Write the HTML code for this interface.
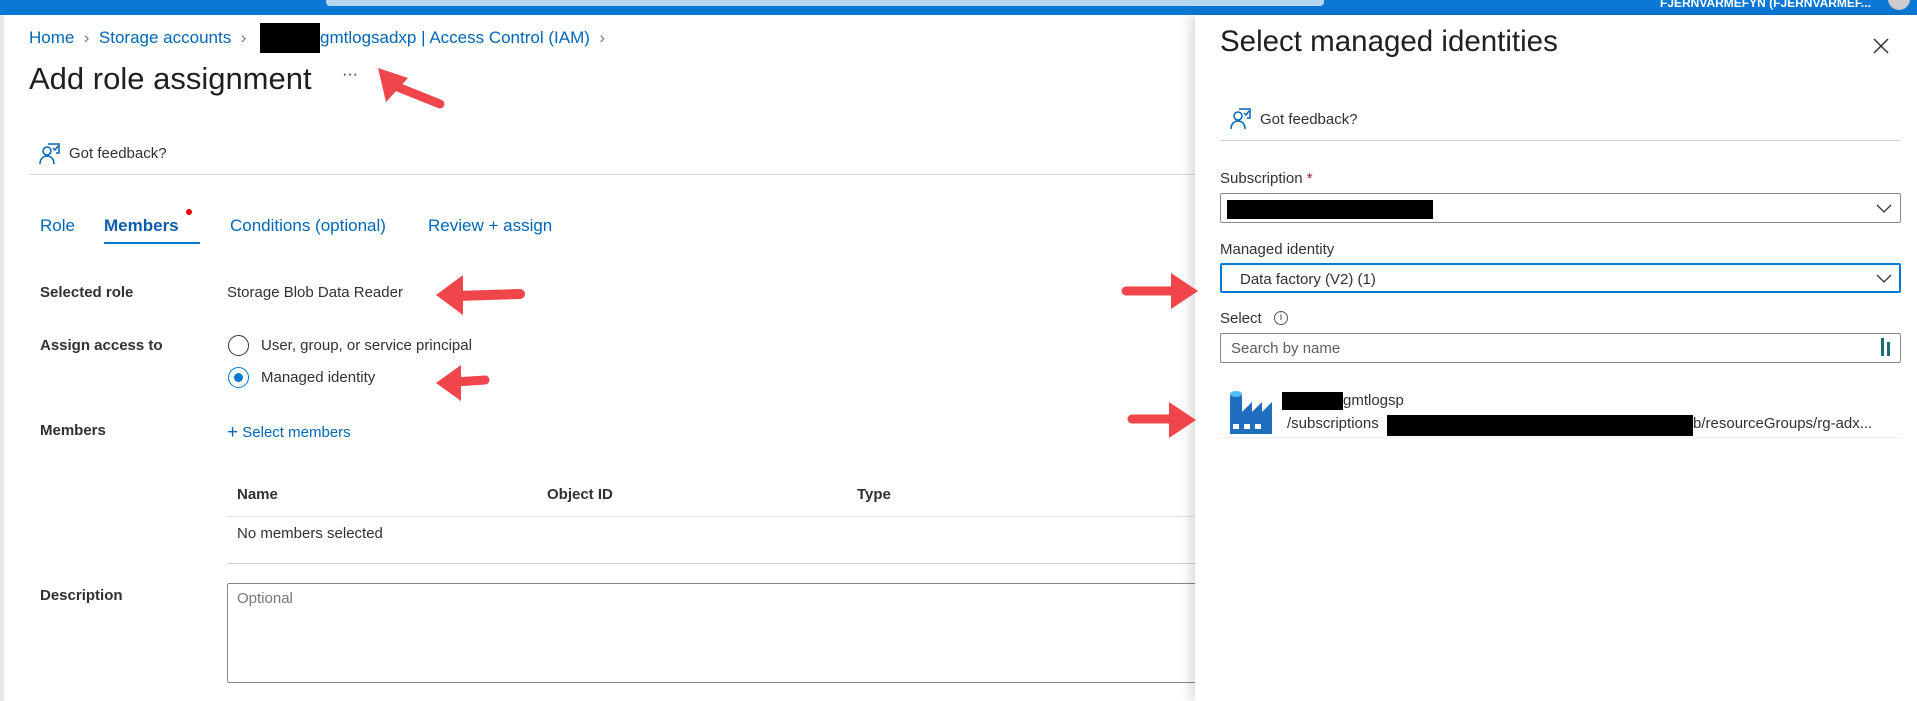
<!DOCTYPE html>
<html><head><meta charset="utf-8"><style>
*{margin:0;padding:0;box-sizing:border-box}
body{width:1917px;height:701px;overflow:hidden;background:#fff;font-family:"Liberation Sans",sans-serif;color:#323130;position:relative;font-size:15px}
.a{position:absolute;white-space:nowrap}
.blue{color:#0067b8}
.b{font-weight:bold}
.line{position:absolute;height:1px;background:#d6d6d6}
.blk{position:absolute;background:#000}
</style></head><body>
<div class="a" style="left:0;top:0;width:1917px;height:15px;background:#0a78d4"></div>
<div class="a" style="left:326px;top:0;width:998px;height:6px;background:#b4d5f0;border-radius:0 0 4px 4px"></div>
<div class="a b" style="left:1660px;top:-4px;color:#fff;font-size:12px">FJERNVARMEFYN (FJERNVARMEF...</div>
<div class="a" style="left:1888px;top:-12px;width:22px;height:22px;border-radius:50%;background:#ccc"></div>
<div class="a" style="left:0;top:15px;width:4px;height:686px;background:#e8e8e8"></div>

<div class="a blue" style="left:29px;top:28px;font-size:17px">Home <span style="color:#777">&nbsp;›&nbsp;</span> Storage accounts <span style="color:#777">&nbsp;›</span></div>
<div class="blk" style="left:260px;top:23px;width:60px;height:30px"></div>
<div class="a blue" style="left:320px;top:28px;font-size:17px">gmtlogsadxp | Access Control (IAM) <span style="color:#777">&nbsp;›</span></div>
<div class="a" style="left:29px;top:61px;font-size:31px;color:#201f1e">Add role assignment</div>
<div class="a" style="left:342px;top:66px;font-size:16px">···</div>

<svg class="a" style="left:38px;top:142px" width="24" height="24" viewBox="0 0 24 24" fill="none" stroke="#0067b8" stroke-width="1.5"><circle cx="9" cy="9" r="4"/><path d="M2 22c0-5 3-8 7-8s7 3 7 8"/><path d="M10 2h11v9h-3"/><path d="M15 6l2 2 3-4"/></svg>
<div class="a" style="left:69px;top:145px;font-size:15px">Got feedback?</div>
<div class="line" style="left:29px;top:174px;width:1170px"></div>

<div class="a blue" style="left:40px;top:216px;font-size:17px">Role</div>
<div class="a b" style="left:104px;top:216px;font-size:17px;color:#0a5ea8">Members</div>
<div class="a" style="left:186px;top:209px;width:6px;height:6px;border-radius:50%;background:#e00"></div>
<div class="a blue" style="left:230px;top:216px;font-size:17px">Conditions (optional)</div>
<div class="a blue" style="left:428px;top:216px;font-size:17px">Review + assign</div>
<div class="a" style="left:104px;top:242px;width:96px;height:2px;background:#0078d4"></div>

<div class="a b" style="left:40px;top:284px">Selected role</div>
<div class="a" style="left:227px;top:284px">Storage Blob Data Reader</div>
<div class="a b" style="left:40px;top:337px">Assign access to</div>
<div class="a" style="left:228px;top:335px;width:21px;height:21px;border-radius:50%;border:1px solid #333"></div>
<div class="a" style="left:261px;top:337px">User, group, or service principal</div>
<div class="a" style="left:228px;top:367px;width:21px;height:21px;border-radius:50%;border:1px solid #0078d4"></div>
<div class="a" style="left:234px;top:373px;width:9px;height:9px;border-radius:50%;background:#0078d4"></div>
<div class="a" style="left:261px;top:369px">Managed identity</div>
<div class="a b" style="left:40px;top:422px">Members</div>
<div class="a blue" style="left:227px;top:421px"><span style="font-size:19px;position:relative;top:1px">+</span> Select members</div>
<div class="a b" style="left:237px;top:486px">Name</div>
<div class="a b" style="left:547px;top:486px">Object ID</div>
<div class="a b" style="left:857px;top:486px">Type</div>
<div class="line" style="left:227px;top:516px;width:970px;background:#e1e1e1"></div>
<div class="a" style="left:237px;top:525px">No members selected</div>
<div class="line" style="left:227px;top:563px;width:970px;background:#cfcfcf"></div>
<div class="a b" style="left:40px;top:587px">Description</div>
<div class="a" style="left:227px;top:583px;width:990px;height:100px;border:1px solid #8a8886;border-radius:2px"></div>
<div class="a" style="left:237px;top:590px;color:#777">Optional</div>

<!-- panel -->
<div class="a" style="left:1195px;top:15px;width:722px;height:686px;background:#fff;box-shadow:-6px 0 10px rgba(0,0,0,.12)"></div>
<div class="a" style="left:1220px;top:25px;font-size:29.5px;color:#201f1e">Select managed identities</div>
<svg class="a" style="left:1872px;top:37px" width="18" height="18" viewBox="0 0 18 18" stroke="#333" stroke-width="1.5"><path d="M2 2L16 16M16 2L2 16"/></svg>
<svg class="a" style="left:1229px;top:107px" width="24" height="24" viewBox="0 0 24 24" fill="none" stroke="#0067b8" stroke-width="1.5"><circle cx="9" cy="9" r="4"/><path d="M2 22c0-5 3-8 7-8s7 3 7 8"/><path d="M10 2h11v9h-3"/><path d="M15 6l2 2 3-4"/></svg>
<div class="a" style="left:1260px;top:111px">Got feedback?</div>
<div class="line" style="left:1220px;top:140px;width:681px"></div>
<div class="a" style="left:1220px;top:170px">Subscription <span style="color:#a4262c">*</span></div>
<div class="a" style="left:1220px;top:193px;width:681px;height:30px;border:1px solid #8a8886;border-radius:2px"></div>
<div class="blk" style="left:1227px;top:200px;width:206px;height:19px"></div>
<svg class="a" style="left:1876px;top:202px" width="16" height="12" viewBox="0 0 16 12" fill="none" stroke="#333" stroke-width="1.3"><path d="M1 3l7 7 7-7"/></svg>
<div class="a" style="left:1220px;top:241px">Managed identity</div>
<div class="a" style="left:1220px;top:263px;width:681px;height:30px;border:2px solid #0078d4;border-radius:2px"></div>
<div class="a" style="left:1240px;top:271px">Data factory (V2) (1)</div>
<svg class="a" style="left:1876px;top:272px" width="16" height="12" viewBox="0 0 16 12" fill="none" stroke="#333" stroke-width="1.3"><path d="M1 3l7 7 7-7"/></svg>
<div class="a" style="left:1220px;top:310px">Select</div>
<div class="a" style="left:1274px;top:311px;width:14px;height:14px;border-radius:50%;border:1px solid #555;font-size:10px;text-align:center;line-height:12px">i</div>
<div class="a" style="left:1220px;top:333px;width:681px;height:30px;border:1px solid #8a8886;border-radius:2px"></div>
<div class="a" style="left:1231px;top:340px;color:#605e5c">Search by name</div>
<div class="a" style="left:1881px;top:338px;width:3px;height:18px;background:#1a6e7a"></div>
<div class="a" style="left:1887px;top:342px;width:3px;height:14px;background:#1a6e7a"></div>
<svg class="a" style="left:1230px;top:390px" width="44" height="44" viewBox="0 0 44 44"><rect x="0" y="4" width="12" height="40" fill="#1f6ebf"/><ellipse cx="6" cy="4" rx="6" ry="3" fill="#50c0f0"/><path d="M12 22l10-10v10l10-10v10l10-10v32H12z" fill="#1f6ebf"/><rect x="3" y="34" width="6" height="5" fill="#fff"/><rect x="14" y="34" width="6" height="5" fill="#fff"/><rect x="25" y="34" width="6" height="5" fill="#fff"/></svg>
<div class="blk" style="left:1282px;top:392px;width:61px;height:18px"></div>
<div class="a" style="left:1343px;top:392px">gmtlogsp</div>
<div class="a" style="left:1287px;top:415px">/subscriptions</div>
<div class="blk" style="left:1387px;top:415px;width:306px;height:21px"></div>
<div class="a" style="left:1693px;top:415px">b/resourceGroups/rg-adx...</div>
<div class="line" style="left:1220px;top:437px;width:681px;background:#eee"></div>

<!-- arrows -->
<svg class="a" style="left:0;top:0" width="1917" height="701" fill="#f0454a">
<path d="M395 86L440 104" stroke="#f0454a" stroke-width="9" stroke-linecap="round"/>
<path d="M378 68l8 34 22-24z"/>
<path d="M455 296L520 294" stroke="#f0454a" stroke-width="10" stroke-linecap="round"/>
<path d="M436 295l27-20v40z"/>
<path d="M455 382L485 380" stroke="#f0454a" stroke-width="9" stroke-linecap="round"/>
<path d="M436 383l25-18v36z"/>
<path d="M1126 291l45 0" stroke="#f0454a" stroke-width="9" stroke-linecap="round"/>
<path d="M1198 291l-27-18v36z"/>
<path d="M1132 419l40 0" stroke="#f0454a" stroke-width="9" stroke-linecap="round"/>
<path d="M1196 420l-27-18v36z"/>
</svg>
</body></html>
